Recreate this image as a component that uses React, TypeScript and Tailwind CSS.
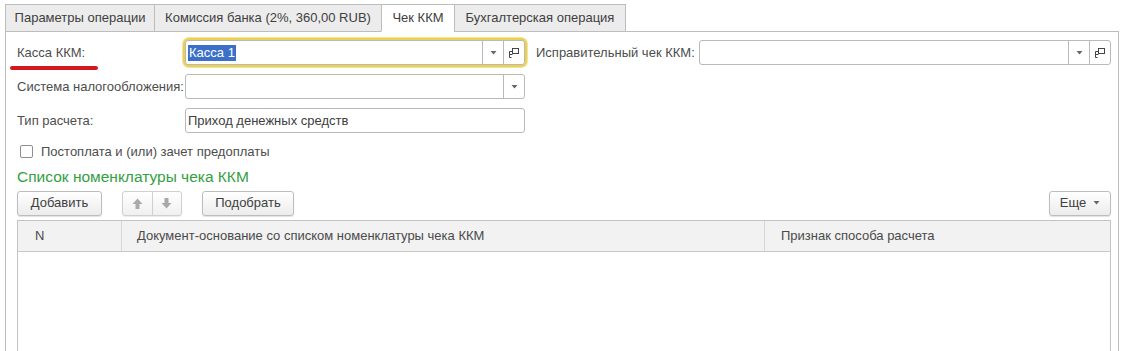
const FONT = { fontFamily: '"Liberation Sans", Arial, sans-serif' }

const TABS = [
  { label: 'Параметры операции', w: 'w-[150px]', active: false },
  { label: 'Комиссия банка (2%, 360,00 RUB)', w: 'w-[228px]', active: false },
  { label: 'Чек ККМ', w: 'w-[74px]', active: true },
  { label: 'Бухгалтерская операция', w: 'w-[172px]', active: false },
]

function Caret() {
  return (
    <svg width="7" height="4" viewBox="0 0 7 4" aria-hidden="true">
      <path d="M0.5 0H6.5L3.5 3.5Z" fill="#666" />
    </svg>
  )
}

function OpenIcon() {
  return (
    <svg width="12" height="12" viewBox="0 0 12 12" aria-hidden="true" fill="none" stroke="#444">
      <rect x="4.5" y="1.5" width="6" height="5" />
      <path d="M4.5 4.5H1.5V10.5H3.5" />
      <path d="M1.5 7.5H4.5" />
    </svg>
  )
}

function Field({
  width,
  children,
  dropdown,
  open,
}: {
  width: string
  children?: React.ReactNode
  dropdown?: boolean
  open?: boolean
}) {
  return (
    <div
      className={`flex h-[25px] ${width} items-stretch rounded-[3px] border border-[#b9b9b9] bg-white`}
    >
      <div className="flex min-w-0 flex-1 items-center pl-[2px]">{children}</div>
      {dropdown && (
        <div className="flex w-[21px] items-center justify-center border-l border-[#b9b9b9]">
          <Caret />
        </div>
      )}
      {open && (
        <div className="flex w-[21px] items-center justify-center border-l border-[#b9b9b9]">
          <OpenIcon />
        </div>
      )}
    </div>
  )
}

function Button({ children, className = '' }: { children: React.ReactNode; className?: string }) {
  return (
    <div
      className={`flex h-[25px] items-center justify-center rounded-[3px] border border-[#bdbdbd] bg-gradient-to-b from-white to-[#ececec] text-[13px] text-[#404040] shadow-[0_1px_1px_rgba(0,0,0,0.12)] ${className}`}
    >
      {children}
    </div>
  )
}

function Arrow({ down }: { down?: boolean }) {
  return (
    <svg width="11" height="11" viewBox="0 0 11 11" aria-hidden="true">
      <path
        d={down ? 'M3.5 0H7.5V5H10.5L5.5 10.5L0.5 5H3.5Z' : 'M3.5 11H7.5V6H10.5L5.5 0.5L0.5 6H3.5Z'}
        fill="#a9a9a9"
      />
    </svg>
  )
}

export default function App() {
  return (
    <div
      className="relative h-[351px] w-[1123px] overflow-hidden bg-white text-[13px] text-[#4d4d4d]"
      style={FONT}
    >
      {/* Tabs */}
      <div className="relative z-10 flex pl-[5px] pt-[4px]">
        {TABS.map((t, i) => (
          <div
            key={t.label}
            className={`flex h-[28px] ${t.w} items-center justify-center border border-[#bdbdbd] ${
              i > 0 ? '-ml-px' : ''
            } ${t.active ? 'border-b-white bg-white' : 'bg-[#ececec]'} text-[#404040]`}
          >
            {t.label}
          </div>
        ))}
      </div>

      {/* Panel */}
      <div className="-mt-px ml-[5px] h-[400px] w-[1114px] border border-[#bdbdbd] pl-[11px]">
        {/* Касса ККМ */}
        <div className="mt-[8px] flex h-[25px] items-center">
          <div className="w-[168px]">Касса ККМ:</div>
          <div className="rounded-[4px] shadow-[0_0_0_2px_#ecd14e,0_0_0_3px_#f3e3a0]">
            <Field width="w-[340px]" dropdown open>
              <span className="bg-[#3b6fc8] px-px leading-[16px] text-white">Касса 1</span>
            </Field>
          </div>
          <div className="ml-[11px] w-[163px]">Исправительный чек ККМ:</div>
          <Field width="w-[412px]" dropdown open />
        </div>

        {/* Система налогообложения */}
        <div className="mt-[9px] flex h-[25px] items-center">
          <div className="w-[168px]">Система налогообложения:</div>
          <Field width="w-[340px]" dropdown />
        </div>

        {/* Тип расчета */}
        <div className="mt-[9px] flex h-[25px] items-center">
          <div className="w-[168px]">Тип расчета:</div>
          <Field width="w-[340px]">
            <span className="text-[#404040]">Приход денежных средств</span>
          </Field>
        </div>

        {/* Checkbox */}
        <div className="mt-[11px] flex h-[15px] items-center">
          <div className="ml-[3px] h-[13px] w-[13px] rounded-[2px] border border-[#8f8f8f] bg-white" />
          <span className="ml-[8px]">Постоплата и (или) зачет предоплаты</span>
        </div>

        {/* Section heading */}
        <div className="mt-[8px] text-[15.5px] leading-[20px] text-[#33a042]">
          Список номенклатуры чека ККМ
        </div>

        {/* Toolbar */}
        <div className="mt-[3px] flex h-[26px] items-center pr-[7px]">
          <Button className="w-[85px]">Добавить</Button>
          <div className="ml-[20px] flex h-[25px] w-[60px] rounded-[3px] border border-[#d0d0d0] bg-gradient-to-b from-white to-[#f0f0f0] shadow-[0_1px_1px_rgba(0,0,0,0.08)]">
            <div className="flex flex-1 items-center justify-center border-r border-[#d0d0d0]">
              <Arrow />
            </div>
            <div className="flex flex-1 items-center justify-center">
              <Arrow down />
            </div>
          </div>
          <Button className="ml-[20px] w-[92px]">Подобрать</Button>
          <div className="flex-1" />
          <Button className="w-[62px] gap-[7px]">
            <span>Еще</span>
            <Caret />
          </Button>
        </div>

        {/* Table */}
        <div className="mt-[4px] h-[200px] w-[1094px] border border-[#c3c3c3] bg-white">
          <div className="flex h-[31px] border-b border-[#c8c8c8] bg-[#f2f2f2] text-[#4a4a4a]">
            <div className="flex w-[104px] items-center border-r border-[#d6d6d6] pl-[17px]">N</div>
            <div className="flex w-[643px] items-center border-r border-[#d6d6d6] pl-[15px]">
              Документ-основание со списком номенклатуры чека ККМ
            </div>
            <div className="flex flex-1 items-center pl-[16px]">Признак способа расчета</div>
          </div>
        </div>
      </div>

      {/* Red annotation underline */}
      <div className="absolute left-[10px] top-[66px] h-[4px] w-[88px] rounded-full bg-[#d2191f]" />
    </div>
  )
}
